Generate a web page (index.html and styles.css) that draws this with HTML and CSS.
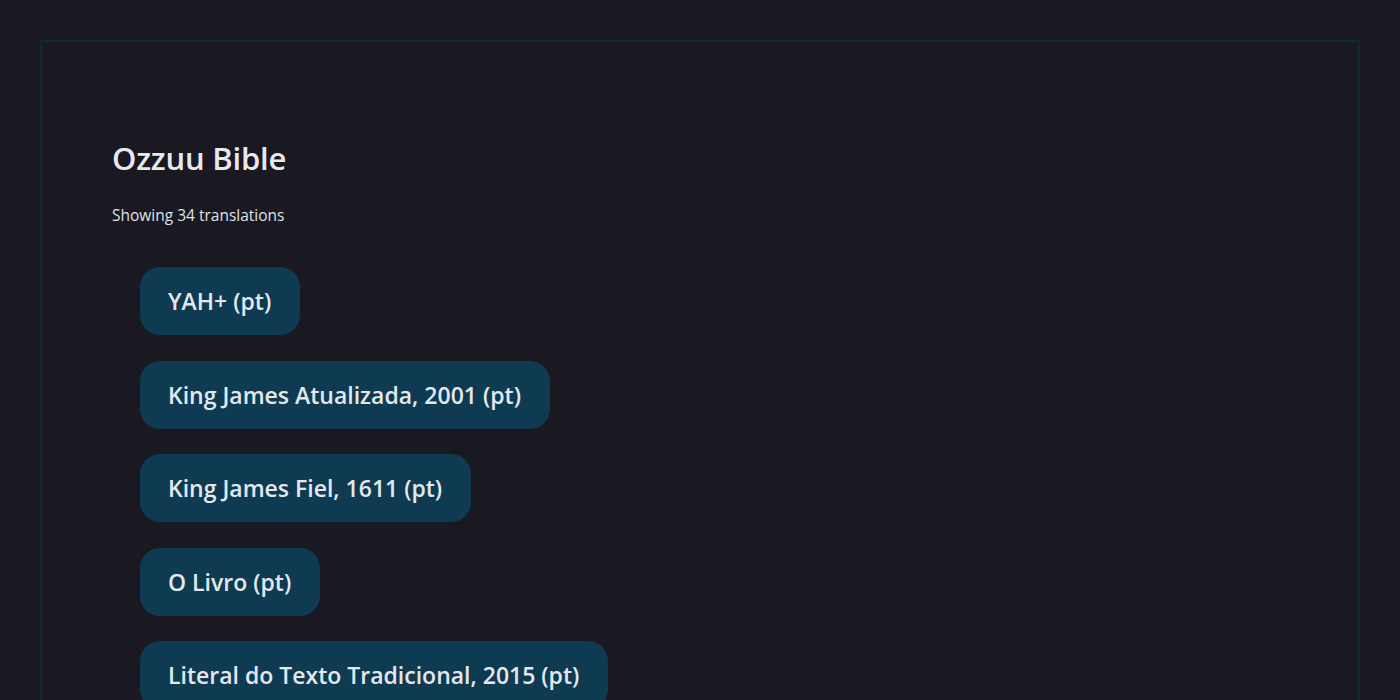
FILE: index.html
```html
<!DOCTYPE html>
<html lang="pt">
<head>
<meta charset="utf-8">
<title>Ozzuu Bible</title>
<link rel="stylesheet" href="styles.css">
</head>
<body>
<main class="panel">
  <h1 class="title">Ozzuu Bible</h1>
  <p class="count">Showing 34 translations</p>
  <ul class="list">
    <li><a class="chip" href="#">YAH+ (pt)</a></li>
    <li><a class="chip" href="#">King James Atualizada, 2001 (pt)</a></li>
    <li><a class="chip" href="#">King James Fiel, 1611 (pt)</a></li>
    <li><a class="chip" href="#">O Livro (pt)</a></li>
    <li><a class="chip" href="#">Literal do Texto Tradicional, 2015 (pt)</a></li>
    <li><a class="chip" href="#">Almeida Corrigida Fiel (pt)</a></li>
    <li><a class="chip" href="#">Almeida Revista e Atualizada (pt)</a></li>
    <li><a class="chip" href="#">Nova Versão Internacional (pt)</a></li>
  </ul>
</main>
</body>
</html>
```

FILE: styles.css
```css
html {
  background: #1a1821;
}
body {
  margin: 0;
  padding: 40px;
  background: #1a1821;
  color: #e3e7ec;
  font-family: "Open Sans", "Noto Sans", sans-serif;
}
.panel {
  border: 2px solid #102835;
  padding: 98px 70px 40px;
}
.title {
  margin: 0;
  font-size: 31px;
  font-weight: 600;
  line-height: 36px;
  color: #e6e9ee;
  letter-spacing: -0.2px;
}
.count {
  margin: 29px 0 0;
  font-size: 15.5px;
  line-height: 20px;
  color: #dfe3e8;
}
.list {
  list-style: none;
  margin: 42px 0 0;
  padding: 0 0 0 28px;
  display: flex;
  flex-direction: column;
  align-items: flex-start;
  gap: 25.5px;
}
.chip {
  display: inline-block;
  background: #0e3b51;
  color: #e3e8ee;
  text-decoration: none;
  font-size: 23px;
  font-weight: 600;
  line-height: 30px;
  padding: 19px 29px 19px 28px;
  border-radius: 20px;
}
```
